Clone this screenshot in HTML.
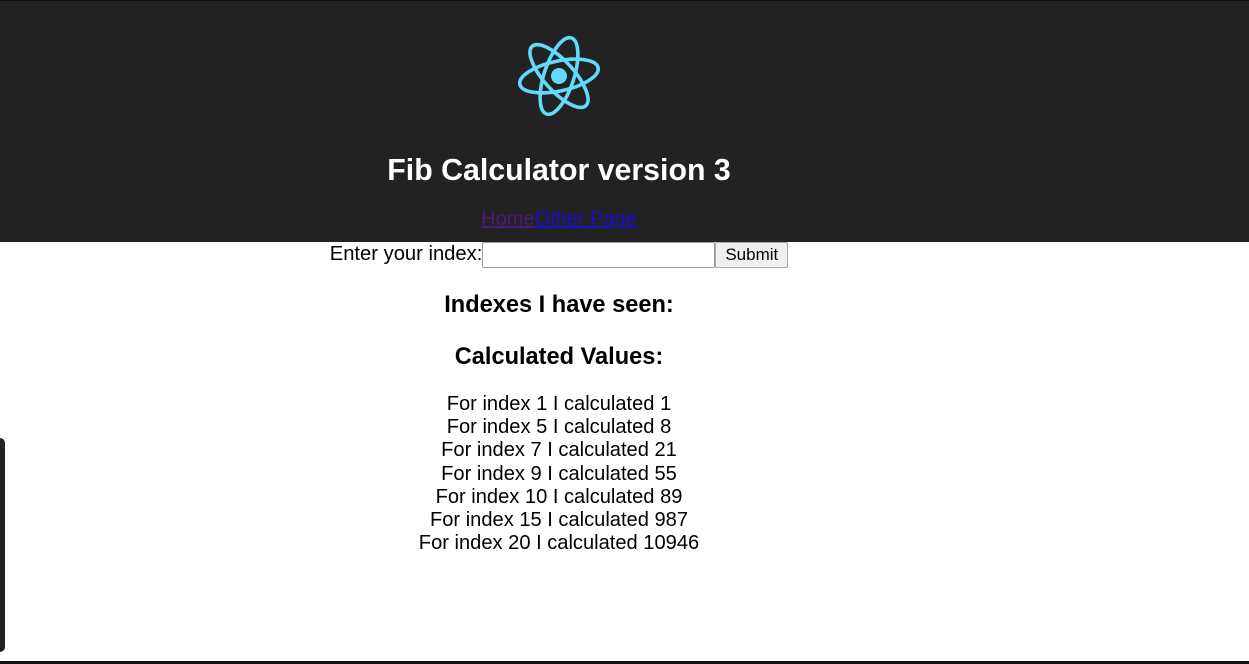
<!DOCTYPE html>
<html><head><style>
body{margin:0;width:1249px;height:664px;overflow:hidden;background:#fff;font-family:"Liberation Sans",sans-serif;position:relative}
.hdr{position:absolute;left:0;top:0;width:1249px;height:241px;background:#222223;border-top:1px solid #111}
.c{position:absolute;left:0;width:1118px;text-align:center}
h1{margin:0;font-size:30.3px;font-weight:bold;color:#fff}
a{font-size:20px}
.row{font-size:20.2px;color:#000}
input{width:231px;height:24px;border:1px solid #999;border-radius:2px;vertical-align:top;margin:0;padding:0}
button{height:26px;font-size:17px;font-family:"Liberation Sans",sans-serif;border:1px solid #aaa;background:#efefef;border-radius:2px;vertical-align:top;margin:0;padding:0 9px}
h3{margin:0;font-size:23.6px;font-weight:bold}
.list{font-size:20.1px;line-height:23.2px}
</style></head><body>
<div class="hdr"></div>
<svg style="position:absolute;left:516px;top:34px" width="86" height="84" viewBox="-43 -42 86 84">
<g fill="none" stroke="#61dafb" stroke-width="3.6" transform="rotate(-12)">
<ellipse rx="40" ry="15"/>
<ellipse rx="40" ry="15" transform="rotate(60)"/>
<ellipse rx="40" ry="15" transform="rotate(120)"/>
</g><circle r="8" fill="#61dafb"/></svg>
<div class="c" style="top:154px"><h1>Fib Calculator version 3</h1></div>
<div class="c" style="top:208px"><a href="#" style="color:#4b1a7a">Home</a><a href="#" style="color:#1a0dcc">Other Page</a></div>
<div class="c row" style="top:242px"><span style="position:relative;top:1px">Enter your index:</span><input><button>Submit</button></div>
<div class="c" style="top:292px"><h3>Indexes I have seen:</h3></div>
<div class="c" style="top:344px"><h3>Calculated Values:</h3></div>
<div class="c list" style="top:393px">For index 1 I calculated 1<br>For index 5 I calculated 8<br>For index 7 I calculated 21<br>For index 9 I calculated 55<br>For index 10 I calculated 89<br>For index 15 I calculated 987<br>For index 20 I calculated 10946</div>
<div style="position:absolute;left:-6px;top:438px;width:11px;height:214px;background:#222;border-radius:5px"></div>
<div style="position:absolute;left:0;top:661px;width:1249px;height:3px;background:#111"></div>
</body></html>
